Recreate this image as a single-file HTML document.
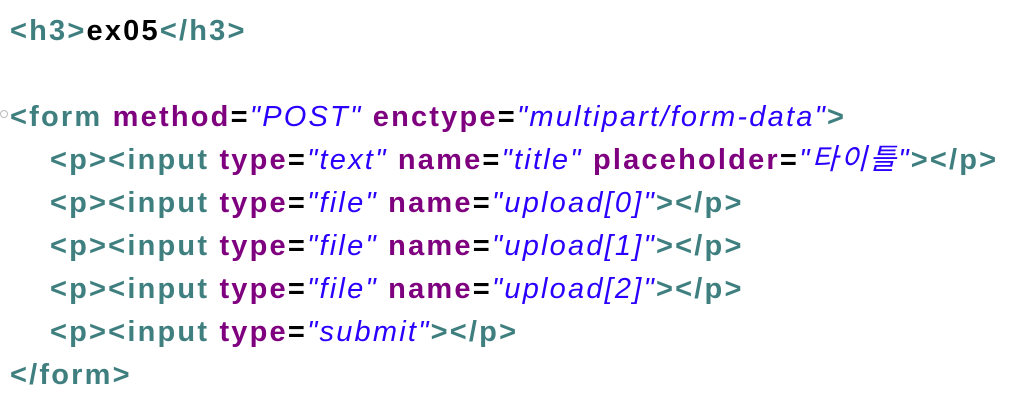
<!DOCTYPE html>
<html><head><meta charset="utf-8"><style>
html,body{margin:0;padding:0;background:#fff;width:1021px;height:409px;overflow:hidden}
.c{position:absolute;left:10px;top:10px;font-family:"Liberation Sans","Noto Sans CJK KR",sans-serif;font-size:29px;font-weight:bold;line-height:43px;white-space:pre;letter-spacing:2.2px}
.c div{height:43px}
.i{padding-left:40px}
.t{color:#3f7f7f}.a{color:#7f007f}.v{color:#2a00ff;font-style:italic;font-weight:normal}.k{color:#000}
.dot{position:absolute;left:0;top:110px;width:6px;height:6px;border:1px solid #bbb;border-radius:50%}
</style></head><body>
<div class="dot"></div>
<div class="c"><div><span class="t">&lt;h3&gt;</span><span class="k">ex05</span><span class="t">&lt;/h3&gt;</span></div><div></div><div><span class="t">&lt;form</span> <span class="a">method</span><span class="k">=</span><span class="v">"POST"</span> <span class="a">enctype</span><span class="k">=</span><span class="v">"multipart/form-data"</span><span class="t">&gt;</span></div><div class="i"><span class="t">&lt;p&gt;&lt;input</span> <span class="a">type</span><span class="k">=</span><span class="v">"text"</span> <span class="a">name</span><span class="k">=</span><span class="v">"title"</span> <span class="a">placeholder</span><span class="k">=</span><span class="v">"타이틀"</span><span class="t">&gt;&lt;/p&gt;</span></div><div class="i"><span class="t">&lt;p&gt;&lt;input</span> <span class="a">type</span><span class="k">=</span><span class="v">"file"</span> <span class="a">name</span><span class="k">=</span><span class="v">"upload[0]"</span><span class="t">&gt;&lt;/p&gt;</span></div><div class="i"><span class="t">&lt;p&gt;&lt;input</span> <span class="a">type</span><span class="k">=</span><span class="v">"file"</span> <span class="a">name</span><span class="k">=</span><span class="v">"upload[1]"</span><span class="t">&gt;&lt;/p&gt;</span></div><div class="i"><span class="t">&lt;p&gt;&lt;input</span> <span class="a">type</span><span class="k">=</span><span class="v">"file"</span> <span class="a">name</span><span class="k">=</span><span class="v">"upload[2]"</span><span class="t">&gt;&lt;/p&gt;</span></div><div class="i"><span class="t">&lt;p&gt;&lt;input</span> <span class="a">type</span><span class="k">=</span><span class="v">"submit"</span><span class="t">&gt;&lt;/p&gt;</span></div><div><span class="t">&lt;/form&gt;</span></div></div>
</body></html>
